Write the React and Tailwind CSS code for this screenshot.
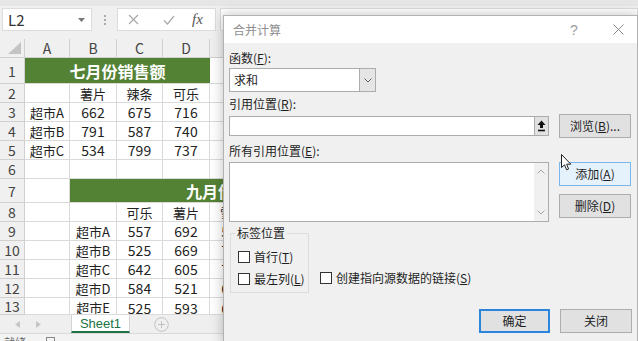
import React from "react";

const GRID =
  "grid grid-cols-[25px_45px_47px_46px_47px_47px_47px_47px_47px_47px_47px]";
const HEAD =
  "flex items-center justify-center bg-[#f0f0f0] border-r border-b border-[#d0d0d0] text-[14px] text-[#444]";
const CELL =
  "flex items-center justify-center bg-white border-r border-b border-[#dadada] text-[#222] whitespace-nowrap overflow-hidden";
const GREEN =
  "flex items-center justify-center bg-[#548235] border-b border-[#dadada] text-[16px] font-bold text-white whitespace-nowrap overflow-hidden";

const blank = (k) => Array.from({ length: k }, () => ({}));

const rows = [
  { n: 1, h: "h-[26px]", cells: [{ t: "七月份销售额", green: true, span: "col-span-4" }, ...blank(6)] },
  { n: 2, h: "h-[19px]", cells: [{}, { t: "薯片" }, { t: "辣条" }, { t: "可乐" }, ...blank(6)] },
  { n: 3, h: "h-[19px]", cells: [{ t: "超市A" }, { t: "662" }, { t: "675" }, { t: "716" }, ...blank(6)] },
  { n: 4, h: "h-[19px]", cells: [{ t: "超市B" }, { t: "791" }, { t: "587" }, { t: "740" }, ...blank(6)] },
  { n: 5, h: "h-[19px]", cells: [{ t: "超市C" }, { t: "534" }, { t: "799" }, { t: "737" }, ...blank(6)] },
  { n: 6, h: "h-[19px]", cells: blank(10) },
  { n: 7, h: "h-[24px]", cells: [{}, { t: "九月份销售额", green: true, span: "col-span-7" }, ...blank(2)] },
  { n: 8, h: "h-[19px]", cells: [{}, {}, { t: "可乐" }, { t: "薯片" }, { t: "雪碧" }, ...blank(5)] },
  { n: 9, h: "h-[19px]", cells: [{}, { t: "超市A" }, { t: "557" }, { t: "692" }, { t: "566" }, ...blank(5)] },
  { n: 10, h: "h-[19px]", cells: [{}, { t: "超市B" }, { t: "525" }, { t: "669" }, { t: "718" }, ...blank(5)] },
  { n: 11, h: "h-[19px]", cells: [{}, { t: "超市C" }, { t: "642" }, { t: "605" }, { t: "733" }, ...blank(5)] },
  { n: 12, h: "h-[19px]", cells: [{}, { t: "超市D" }, { t: "584" }, { t: "521" }, { t: "649" }, ...blank(5)] },
  { n: 13, h: "h-[17px]", cells: [{}, { t: "超市E" }, { t: "525" }, { t: "593" }, { t: "671" }, ...blank(5)] },
];

const Checkbox = ({ label }) => (
  <div className="flex items-center h-[16px]">
    <span className="w-[12px] h-[12px] bg-white border border-[#333]" />
    <span className="ml-[4px]">{label}</span>
  </div>
);

const Btn = ({ children, tone = "plain" }) => {
  const tones = {
    plain: "bg-[#e1e1e1] border border-[#adadad]",
    hover: "bg-[#e5f1fb] border border-[#7ab8ec]",
    primary: "bg-[#e1e1e1] border-2 border-[#2b86db]",
  };
  return (
    <div
      className={`h-[24px] flex items-center justify-center text-[12px] ${tones[tone]}`}
    >
      {children}
    </div>
  );
};

export default function App() {
  return (
    <div className="relative w-[638px] h-[341px] overflow-hidden bg-[#f0f0f0] font-['Noto_Sans_CJK_SC',sans-serif] leading-none select-none">
      {/* formula bar */}
      <div className="h-[39px] flex items-start pt-[8px] bg-[#f0f0f0] border-t-[6px] border-[#e6e6e6]">
        <div className="ml-[2px] w-[90px] h-[23px] -mt-[6px] bg-white border border-[#dcdcdc] flex items-center pl-[5px] pr-[6px] text-[15px] text-[#333]">
          <span>L2</span>
          <svg className="ml-auto" width="7" height="4" viewBox="0 0 7 4">
            <path d="M0 0h7L3.5 4z" fill="#777" />
          </svg>
        </div>
        <div className="ml-[12px] -mt-[6px] h-[23px] flex flex-col justify-center gap-[2px]">
          <span className="w-[2px] h-[2px] bg-[#aaa]" />
          <span className="w-[2px] h-[2px] bg-[#aaa]" />
          <span className="w-[2px] h-[2px] bg-[#aaa]" />
        </div>
        <div className="ml-[11px] -mt-[6px] w-[99px] h-[23px] bg-white border border-[#dcdcdc] flex items-center">
          <svg className="ml-[10px]" width="11" height="11" viewBox="0 0 11 11">
            <path d="M1 1l9 9M10 1l-9 9" stroke="#a8a8a8" strokeWidth="1.2" />
          </svg>
          <svg className="ml-[24px]" width="12" height="10" viewBox="0 0 12 10">
            <path d="M1 5.5l3.5 3.5L11 1" stroke="#a8a8a8" strokeWidth="1.2" fill="none" />
          </svg>
          <span className="ml-[17px] italic text-[15px] text-[#555] font-['Liberation_Serif',serif]">
            fx
          </span>
        </div>
        <div className="ml-[4px] -mt-[6px] flex-1 h-[23px] bg-white border border-[#dcdcdc]" />
      </div>

      {/* column headers */}
      <div className={`${GRID} h-[19px]`}>
        <div className={`${HEAD} relative`}>
          <svg className="absolute right-[3px] bottom-[3px]" width="13" height="12" viewBox="0 0 13 12">
            <path d="M13 0V12H0z" fill="#c4c4c4" />
          </svg>
        </div>
        {["A", "B", "C", "D", "E", "F", "G", "H", "I", "J"].map((c) => (
          <div key={c} className={HEAD}>
            {c}
          </div>
        ))}
      </div>

      {/* sheet rows */}
      {rows.map((r) => (
        <div key={r.n} className={`${GRID} ${r.h} overflow-hidden`}>
          <div className={HEAD}>{r.n}</div>
          {r.cells.map((c, i) =>
            c.green ? (
              <div key={i} className={`${GREEN} ${c.span}`}>
                {c.t}
              </div>
            ) : (
              <div
                key={i}
                className={`${CELL} ${/\d{3}/.test(c.t || "") ? "text-[14px]" : "text-[13px]"} ${r.n === 13 ? "items-start pt-[3px]" : ""}`}
              >
                {c.t}
              </div>
            )
          )}
        </div>
      ))}

      {/* sheet tabs */}
      <div className="h-[18px] flex items-stretch bg-[#efefef]">
        <svg className="ml-[15px] self-center" width="5" height="7" viewBox="0 0 5 7">
          <path d="M5 0v7L0 3.5z" fill="#c6c6c6" />
        </svg>
        <svg className="ml-[16px] self-center" width="5" height="7" viewBox="0 0 5 7">
          <path d="M0 0v7l5-3.5z" fill="#c6c6c6" />
        </svg>
        <div className="ml-[30px] w-[59px] bg-white border-x border-[#d4d4d4] border-b-2 border-b-[#217346] flex items-center justify-center text-[13px] text-[#217346] font-['Liberation_Sans',sans-serif]">
          Sheet1
        </div>
        <svg className="ml-[24px] self-center" width="15" height="15" viewBox="0 0 15 15">
          <circle cx="7.5" cy="7.5" r="6.8" fill="none" stroke="#c2c2c2" />
          <path d="M7.5 4v7M4 7.5h7" stroke="#c2c2c2" />
        </svg>
      </div>

      {/* status bar */}
      <div className="h-[8px] bg-[#f3f3f3] border-t border-[#dadada] flex items-start overflow-hidden">
        <span className="ml-[4px] mt-[3px] text-[11px] text-[#666]">就绪</span>
        <span className="ml-[20px] mt-[3px] w-[9px] h-[9px] border border-[#888]" />
      </div>

      {/* dialog */}
      <div className="absolute left-[223px] top-[15px] w-[415px] h-[330px] bg-[#f0f0f0] border border-[#b2b2b2] shadow-[0_0_12px_rgba(0,0,0,0.25)] text-[12px] text-[#1e1e1e]">
        <div className="h-[27px] bg-white flex items-center pl-[9px]">
          <span className="text-[#8e8e8e]">合并计算</span>
          <span className="ml-[289px] text-[14px] text-[#9a9a9a] font-['Liberation_Sans',sans-serif]">?</span>
          <svg className="ml-[35px]" width="11" height="11" viewBox="0 0 11 11">
            <path d="M0.5 0.5l10 10M10.5 0.5l-10 10" stroke="#8a8a8a" strokeWidth="1" />
          </svg>
        </div>

        <div className="pl-[5px] pr-[5px]">
          <div className="mt-[7px] h-[16px] flex items-center">函数(<span className="underline">F</span>):</div>
          <div className="mt-[2px] w-[147px] h-[24px] bg-white border border-[#acacac] flex items-center">
            <span className="ml-[4px]">求和</span>
            <div className="ml-auto w-[16px] h-full bg-[#e5e5e5] border-l border-[#acacac] flex items-center justify-center">
              <svg width="8" height="5" viewBox="0 0 8 5">
                <path d="M0.5 0.5L4 4l3.5-3.5" stroke="#606060" fill="none" />
              </svg>
            </div>
          </div>

          <div className="mt-[4px] h-[16px] flex items-center">引用位置(<span className="underline">R</span>):</div>
          <div className="mt-[2px] flex items-center gap-[10px]">
            <div className="w-[320px] h-[20px] bg-white border border-[#acacac] flex justify-end">
              <div className="w-[14px] h-full bg-[#e1e1e1] border-l border-[#adadad] flex items-center justify-center">
                <svg width="9" height="12" viewBox="0 0 9 12">
                  <path d="M4.5 0.5L8.5 5H6v3H3V5H0.5z" fill="#111" />
                  <path d="M1 10.5h7" stroke="#111" strokeWidth="1.6" />
                </svg>
              </div>
            </div>
            <div className="w-[72px]">
              <Btn>浏览(<span className="underline">B</span>)...</Btn>
            </div>
          </div>

          <div className="mt-[5px] h-[16px] flex items-center">所有引用位置(<span className="underline">E</span>):</div>
          <div className="mt-[3px] flex items-start gap-[10px]">
            <div className="w-[320px] h-[60px] bg-white border border-[#acacac] flex justify-end">
              <div className="w-[14px] h-full bg-[#f0f0f0] flex flex-col items-center justify-between py-[6px]">
                <svg width="8" height="5" viewBox="0 0 8 5">
                  <path d="M0.5 4.5L4 1l3.5 3.5" stroke="#a6a6a6" fill="none" />
                </svg>
                <svg width="8" height="5" viewBox="0 0 8 5">
                  <path d="M0.5 0.5L4 4l3.5-3.5" stroke="#a6a6a6" fill="none" />
                </svg>
              </div>
            </div>
            <div className="w-[72px] flex flex-col gap-[8px]">
              <Btn tone="hover">添加(<span className="underline">A</span>)</Btn>
              <Btn>删除(<span className="underline">D</span>)</Btn>
            </div>
          </div>

          <div className="mt-[3px] flex items-end">
            <fieldset className="ml-[1px] w-[79px] h-[68px] border border-[#dcdcdc] pl-[7px]">
              <legend className="ml-[-3px] px-[2px] h-[16px] leading-[16px]">标签位置</legend>
              <div className="mt-[8px]">
                <Checkbox label={<>首行(<span className="underline">T</span>)</>} />
              </div>
              <div className="mt-[6px]">
                <Checkbox label={<>最左列(<span className="underline">L</span>)</>} />
              </div>
            </fieldset>
            <div className="ml-[11px] mb-[7px]">
              <Checkbox label={<>创建指向源数据的链接(<span className="underline">S</span>)</>} />
            </div>
          </div>

          <div className="mt-[16px] flex justify-end gap-[10px]">
            <div className="w-[71px]">
              <Btn tone="primary">确定</Btn>
            </div>
            <div className="w-[72px]">
              <Btn>关闭</Btn>
            </div>
          </div>
        </div>
      </div>

      {/* mouse cursor */}
      <svg className="absolute left-[561px] top-[154px]" width="11" height="17" viewBox="0 0 11 17">
        <path d="M0.5 0.5V13.5L3.5 10.8L5.6 15.8L7.6 15L5.6 10.2H9.8Z" fill="#fff" stroke="#222" strokeWidth="1" strokeLinejoin="round" />
      </svg>
    </div>
  );
}
